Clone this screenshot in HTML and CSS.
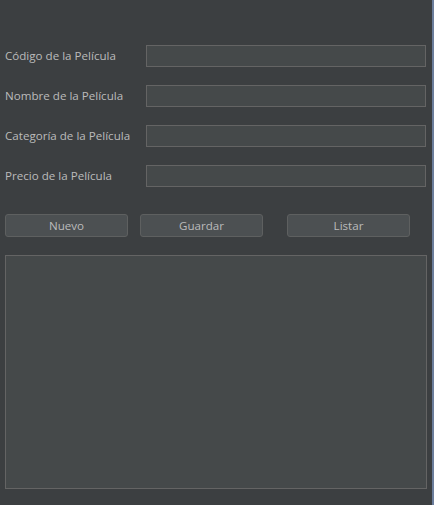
FILE: index.html
```html
<!DOCTYPE html>
<html>
<head>
<meta charset="utf-8">
<link rel="stylesheet" href="styles.css">
</head>
<body>
<div class="window">
  <div class="form">
    <label class="lbl">Código de la Película</label><div class="field"></div>
    <label class="lbl">Nombre de la Película</label><div class="field"></div>
    <label class="lbl">Categoría de la Película</label><div class="field"></div>
    <label class="lbl">Precio de la Película</label><div class="field"></div>
  </div>
  <div class="buttons">
    <button class="btn">Nuevo</button>
    <button class="btn btn-mid">Guardar</button>
    <button class="btn btn-last">Listar</button>
  </div>
  <div class="area"></div>
</div>
</body>
</html>
```
FILE: styles.css
```css
html, body {
  margin: 0;
  padding: 0;
  background: #3c3f41;
}
.window {
  width: 434px;
  height: 505px;
  box-sizing: border-box;
  border-right: 2px solid #6b7d9b;
  padding: 45px 0 0 5px;
  font-family: "Open Sans", "Noto Sans", sans-serif;
  font-size: 11.6px;
  color: #bbbbbb;
}
.form {
  display: grid;
  grid-template-columns: 141px 280px;
  row-gap: 18px;
  align-items: center;
}
.lbl {
  line-height: 22px;
}
.field {
  height: 22px;
  box-sizing: border-box;
  background: #45494a;
  border: 1px solid #646464;
}
.buttons {
  display: flex;
  margin-top: 27px;
}
.btn {
  width: 123px;
  height: 23px;
  box-sizing: border-box;
  background: #4c5052;
  border: 1px solid #5e6060;
  border-radius: 3px;
  color: #bbbbbb;
  font-family: inherit;
  font-size: 11.6px;
  padding: 0;
}
.btn-mid { margin-left: 12px; }
.btn-last { margin-left: 24px; }
.area {
  margin-top: 18px;
  width: 422px;
  height: 234px;
  box-sizing: border-box;
  background: #45494a;
  border: 1px solid #646464;
}
```
